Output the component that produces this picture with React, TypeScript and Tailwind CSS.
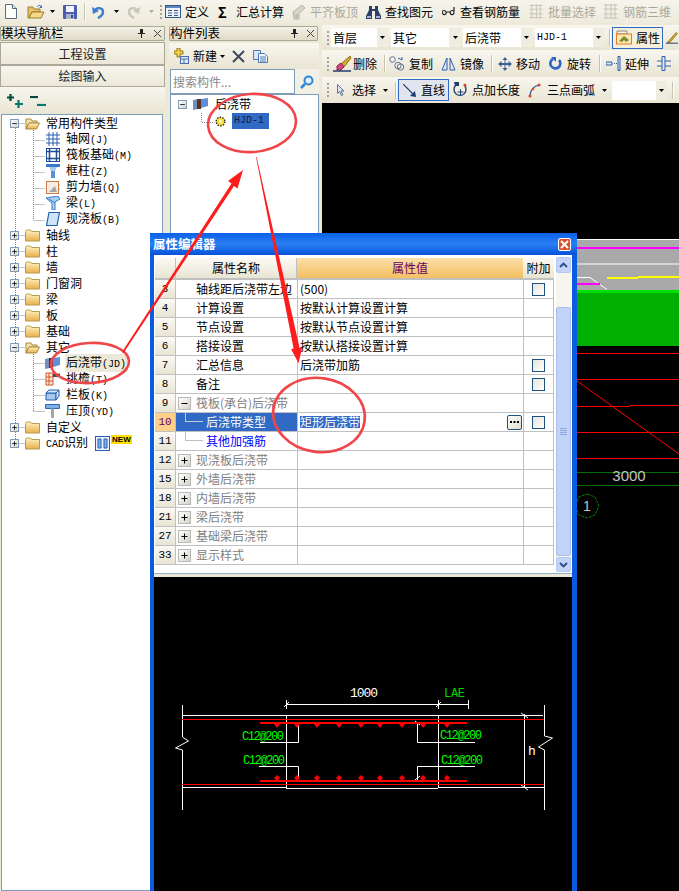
import type { ReactNode } from "react";

const cjk = "font-['Noto_Sans_CJK_SC','Liberation_Sans',sans-serif]";
const mono = "font-['Liberation_Mono',monospace] text-[10px]";

const Caret = ({ className = "", gray = false }: { className?: string; gray?: boolean }) => (
  <svg width="5" height="3" viewBox="0 0 5 3" className={"shrink-0 " + className}>
    <path d="M0 0h5L2.5 3z" fill={gray ? "#aca899" : "#000"} />
  </svg>
);

const Sep = ({ className = "" }: { className?: string }) => (
  <div className={"w-[2px] h-[17px] shrink-0 border-l border-[#c5c2b0] bg-white " + className} />
);

const Grip = ({ className = "" }: { className?: string }) => (
  <div className={"w-[3px] h-[14px] shrink-0 border-l-2 border-dotted border-[#a8a594] " + className} />
);

// toolbar icons
const NewIcon = () => (
  <svg width="12" height="15" viewBox="0 0 12 15">
    <path d="M.5.5h7l4 4v10H.5z" fill="#fdfdfa" stroke="#5a6a80" />
    <path d="M7.5.5v4h4" fill="#dfe6ee" stroke="#5a6a80" />
  </svg>
);
const OpenIcon = () => (
  <svg width="18" height="15" viewBox="0 0 18 15">
    <path d="M1 3h5l1 2h6v3H5l-3 6H1z" fill="#e8c262" stroke="#9a7a2c" />
    <path d="M2 14l3-6h12l-3 6z" fill="#f5d98a" stroke="#9a7a2c" />
    <path d="M10 3c1-2 3-2 5 0" fill="none" stroke="#3d6cb0" />
    <path d="M15 1v3h-3z" fill="#3d6cb0" />
  </svg>
);
const SaveIcon = () => (
  <svg width="14" height="14" viewBox="0 0 14 14">
    <rect width="14" height="14" rx="1" fill="#4a5fae" />
    <rect x="3" y="1" width="8" height="6" fill="#f2f4fa" />
    <rect x="3" y="9" width="8" height="5" fill="#aab4d0" />
    <rect x="8" y="10" width="2" height="3" fill="#3a4a86" />
  </svg>
);
const UndoIcon = ({ color }: { color: string }) => (
  <svg width="13" height="14" viewBox="0 0 13 14">
    <path d="M3 6c1-4 8-4 8 1 0 3-3 5-5 6" fill="none" stroke={color} strokeWidth="2.4" />
    <path d="M0 2l1 7 6-3z" fill={color} />
  </svg>
);
const RedoIcon = () => (
  <svg width="13" height="14" viewBox="0 0 13 14">
    <path d="M10 6C9 2 2 2 2 7c0 3 3 5 5 6" fill="none" stroke="#c9c7ba" strokeWidth="2.4" />
    <path d="M13 2l-1 7-6-3z" fill="#c9c7ba" />
  </svg>
);
const DefineIcon = () => (
  <svg width="16" height="13" viewBox="0 0 16 13">
    <rect x=".5" y=".5" width="15" height="12" fill="#eef2f8" stroke="#34588e" />
    <path d="M1 1h14v2H1z" fill="#5f86bc" />
    <path d="M3 5.5h4M3 8h4M3 10.5h4M9 5.5h4M9 8h4M9 10.5h4" stroke="#34588e" />
  </svg>
);
const GrayIcon = () => (
  <svg width="14" height="16" viewBox="0 0 14 16">
    <path d="M1 8l9-7 3 3-6 5v6H2z" fill="#d8d6cb" stroke="#b5b3a6" />
    <path d="M3 11h3M3 13h3" stroke="#aaa89a" />
  </svg>
);
const Binoculars = () => (
  <svg width="15" height="14" viewBox="0 0 15 14">
    <path d="M3 1h3v3h3V1h3v4l3 6v3H9V6H6v8H0v-3l3-6z" fill="#2e3f68" />
    <path d="M1 11h4v2H1zM10 11h4v2h-4z" fill="#9fb4d8" />
  </svg>
);
const Glasses = () => (
  <svg width="13" height="9" viewBox="0 0 13 9">
    <path d="M0 5c1-2 3-2 4 0 1 3-3 4-4 0zM8 5c1-2 4-2 4 0 0 4-4 3-4 0zM4 5h4M12 4V0" fill="none" stroke="#222" strokeWidth="1.2" />
  </svg>
);
const GrayGrid = ({ w }: { w: number }) => (
  <svg width={w} height="15" viewBox="0 0 15 15">
    <path d="M.5 1h14M.5 5h14M.5 10h14M.5 14h14M3 0v15M8 0v15M12 0v15" fill="none" stroke="#c6c4b7" />
  </svg>
);
const AttrIcon = () => (
  <svg width="16" height="15" viewBox="0 0 16 15">
    <path d="M1 1h10v3H1z" fill="#f6f3e6" stroke="#8c8a7c" />
    <rect x=".5" y="4" width="15" height="10" fill="#fbe7b4" stroke="#e67d23" />
    <path d="M3 11l5-5 5 4-3 2-2-2-2 2z" fill="#7e8a2a" />
  </svg>
);
const PenIcon = () => (
  <svg width="12" height="13" viewBox="0 0 19 20">
    <path d="M2 18l14-16 2 2L6 18z" fill="#d8a628" stroke="#6f5a16" />
    <path d="M0 19h19" stroke="#203a66" strokeWidth="1.5" />
  </svg>
);
const EraseIcon = () => (
  <svg width="19" height="17" viewBox="0 0 19 17">
    <path d="M8 9l9-8 1 2-7 9z" fill="#d9a92a" stroke="#8a6a14" />
    <path d="M4 11l4-3 3 4-3 3H4z" fill="#d2477e" stroke="#8c2450" />
    <path d="M0 16h18" stroke="#1f3d73" strokeWidth="1.5" />
  </svg>
);
const CopyTool = () => (
  <svg width="16" height="15" viewBox="0 0 16 15">
    <circle cx="3.5" cy="3.5" r="2.8" fill="none" stroke="#60718c" />
    <circle cx="9" cy="9.5" r="3.2" fill="none" stroke="#60718c" />
    <circle cx="11.5" cy="11" r="3.2" fill="none" stroke="#60718c" />
    <path d="M9 2l4 2M13 4l0-3" stroke="#2f5fa8" />
  </svg>
);
const MirrorIcon = () => (
  <svg width="15" height="14" viewBox="0 0 15 14">
    <path d="M6 1v12H1zM9 1v12h5z" fill="#dfe7f5" stroke="#2f5fa8" />
  </svg>
);
const MoveIcon = () => (
  <svg width="14" height="14" viewBox="0 0 14 14">
    <path d="M7 0l2.5 3h-2v3h3V4L14 7l-3.5 3V8h-3v3h2L7 14l-2.5-3h2V8h-3v2L0 7l3.5-3v2h3V3h-2z" fill="#3c6098" />
  </svg>
);
const RotateIcon = () => (
  <svg width="13" height="13" viewBox="0 0 13 13">
    <path d="M4 2a5 5 0 1 0 6 1" fill="none" stroke="#2f66c4" strokeWidth="2.6" />
    <path d="M2 0h5v5z" fill="#2f66c4" />
  </svg>
);
const ExtendIcon = () => (
  <svg width="15" height="15" viewBox="0 0 15 15">
    <path d="M0 6h6v3H0z" fill="#dde6f4" stroke="#2f5fa8" />
    <path d="M8 7.5h3" stroke="#2f5fa8" strokeDasharray="1 1" />
    <path d="M12 .5h2v14h-2z" fill="#dde6f4" stroke="#2f5fa8" />
  </svg>
);
const TrimIcon = () => (
  <svg width="14" height="15" viewBox="0 0 14 15">
    <path d="M0 5h14M0 10h14" stroke="#2f5fa8" />
    <path d="M5 .5h3v14H5z" fill="#dde6f4" stroke="#2f5fa8" />
  </svg>
);
const CursorIcon = () => (
  <svg width="8" height="12" viewBox="0 0 8 12">
    <path d="M.5.5v9l2-2 2 4 1.500-.7-2-3.800h3z" fill="#dbe3f2" stroke="#5e7499" />
  </svg>
);
const LineIcon = () => (
  <svg width="13" height="13" viewBox="0 0 13 13">
    <path d="M0 0l12 12" stroke="#1f3d73" strokeWidth="1.200" />
    <path d="M13 13l-6-1 5-5z" fill="#1f3d73" />
  </svg>
);
const PointLenIcon = () => (
  <svg width="15" height="16" viewBox="0 0 15 16">
    <path d="M3 3a6 6 0 1 0 8 0" fill="none" stroke="#1f3d73" strokeWidth="1.300" />
    <path d="M1 0h5v4H2z" fill="#1f3d73" />
    <path d="M7.500 7v6M4.500 10h6" stroke="#1f3d73" />
    <circle cx="12" cy="3" r="1.500" fill="#d84a2c" />
  </svg>
);
const ArcIcon = () => (
  <svg width="13" height="15" viewBox="0 0 13 15">
    <path d="M2 13C2 7 6 3 11 2" fill="none" stroke="#1f5fa8" strokeWidth="1.200" />
    <circle cx="2" cy="13" r="1.600" fill="#d84a2c" />
    <circle cx="5" cy="6" r="1.300" fill="#d84a2c" />
    <circle cx="11" cy="2" r="1.600" fill="#d84a2c" />
  </svg>
);

const Tool = ({ icon, label, gap, className = "", gray = false }: { icon: ReactNode; label: string; gap: string; className?: string; gray?: boolean }) => (
  <div className={"flex items-center shrink-0 " + gap + " " + className}>
    {icon}
    <span className={"whitespace-nowrap " + (gray ? "text-[#aca899]" : "text-black")}>{label}</span>
  </div>
);

const Combo = ({ label, width, arrow = "w-[11px]", code = false, className = "" }: { label: string; width: string; arrow?: string; code?: boolean; className?: string }) => (
  <div className={"h-[19px] bg-white flex items-center justify-between shrink-0 " + width + " " + className}>
    <span className={"pl-[2px] " + (code ? mono : "")}>{label}</span>
    <div className={"h-full bg-[#efece0] flex items-center justify-center " + arrow}>
      <Caret />
    </div>
  </div>
);

const PanelTitle = ({ label, width }: { label: string; width: string }) => (
  <div className={"h-[15px] flex items-center justify-between border border-[#aca899] rounded-[1px] bg-linear-to-b from-[#f3f1e6] to-[#dfdbc8] " + width}>
    <span className="text-[12.500px] leading-none whitespace-nowrap">{label}</span>
    <div className="flex items-center gap-[9px] pr-[3px]">
      <svg width="7" height="9" viewBox="0 0 7 9">
        <path d="M2 0h3v4h2v1H4v4H3V5H0V4h2z" fill="#222" />
      </svg>
      <svg width="7" height="7" viewBox="0 0 7 7">
        <path d="M0 0l7 7M7 0L0 7" stroke="#444" />
      </svg>
    </div>
  </div>
);

const Box = ({ open, size = "w-[9px] h-[9px]", border = "border-[#7f9db9]" }: { open: boolean; size?: string; border?: string }) => (
  <div className={"shrink-0 border flex items-center justify-center bg-linear-to-br from-white to-[#d5d2c4] " + size + " " + border}>
    <svg width="9" height="9" viewBox="0 0 9 9">
      <path d={open ? "M1.500 4.500h6" : "M1.500 4.500h6M4.500 1.500v6"} stroke="#000" />
    </svg>
  </div>
);

const Folder = ({ open = false }: { open?: boolean }) => (
  <svg width="15" height="13" viewBox="0 0 15 13" className="shrink-0">
    <defs>
      <linearGradient id="fld" x1="0" y1="0" x2="0" y2="1">
        <stop offset="0" stopColor="#fff3c4" />
        <stop offset="1" stopColor="#e8b048" />
      </linearGradient>
    </defs>
    {open ? (
      <>
        <path d="M1 2h5l1 2h5v2H4l-3 6z" fill="#f4e2ac" stroke="#a88a3c" />
        <path d="M1 12l3-6h10.500l-3 6z" fill="url(#fld)" stroke="#a88a3c" />
      </>
    ) : (
      <path d="M.5 12V2.500l1-1.500h4l1 1.500h8V12z" fill="url(#fld)" stroke="#b89a50" />
    )}
  </svg>
);

const BandIcon = () => (
  <svg width="15" height="12" viewBox="0 0 15 12" className="shrink-0">
    <path d="M0 2l5-1v10l-5 1z" fill="#6f8fc0" />
    <path d="M4 1h4v10H4z" fill="#5a3420" />
    <path d="M8 1l7-1v8l-7 2z" fill="#5f8ed8" />
  </svg>
);

const nodeIcons: Record<string, ReactNode> = {
  grid: (
    <svg width="14" height="14" viewBox="0 0 14 14">
      <path d="M3 0v14M7 0v14M11 0v14M0 3h14M0 7h14M0 11h14" stroke="#2a5fb0" />
    </svg>
  ),
  raft: (
    <svg width="14" height="14" viewBox="0 0 14 14">
      <rect x=".5" y=".5" width="13" height="13" fill="#fff" stroke="#1f4f96" />
      <path d="M0 3.500h14M0 10.500h14M3.500 0v14M10.500 0v14" stroke="#1f4f96" strokeWidth="1.500" />
    </svg>
  ),
  column: (
    <svg width="14" height="14" viewBox="0 0 14 14">
      <path d="M0 0h14v3H0z" fill="#3a78c8" />
      <path d="M3 3l2 4h4l2-4z" fill="#a8c8ee" />
      <path d="M5 7h4v7H5z" fill="#5a92d8" />
    </svg>
  ),
  wall: (
    <svg width="14" height="13" viewBox="0 0 14 13">
      <rect x=".5" y=".5" width="12" height="12" fill="#f8ece0" stroke="#c87a4a" />
      <path d="M3 11l6-6 2 6z" fill="#a8a8a0" />
      <path d="M13 3v2M13 7v2" stroke="#e68a30" />
    </svg>
  ),
  beam: (
    <svg width="14" height="14" viewBox="0 0 14 14">
      <path d="M0 2l12-2 2 3-5 3v8H6V7z" fill="#a9d0f2" stroke="#3a78c8" />
      <path d="M3 3l6 4" stroke="#3a78c8" />
    </svg>
  ),
  slab: (
    <svg width="14" height="14" viewBox="0 0 14 14">
      <path d="M3 .5h10.500L11 13.500H.5z" fill="#cfe4f8" stroke="#1f5fb0" strokeWidth="1.200" />
    </svg>
  ),
  band: <BandIcon />,
  eave: (
    <svg width="15" height="14" viewBox="0 0 15 14">
      <path d="M1 1h7v12H1z" fill="#fbe6d8" stroke="#d0582a" />
      <path d="M1 5h7M1 9h7M4 1v12M8 2h7v2H8z" stroke="#d0582a" fill="none" />
      <path d="M8 2h7v3H8z" fill="#3a4a68" />
    </svg>
  ),
  rail: (
    <svg width="15" height="12" viewBox="0 0 15 12">
      <path d="M1 4h10v7H1z" fill="#a8c8ee" stroke="#1f5fb0" />
      <path d="M1 4l3-3h10l-3 3zM11 4l3-3v6l-3 4z" fill="#d8e8f8" stroke="#1f5fb0" />
    </svg>
  ),
  cap: (
    <svg width="15" height="14" viewBox="0 0 15 14">
      <path d="M.5.5h14v4H.5z" fill="#7fb0e8" stroke="#2a68b8" />
      <path d="M6 4.500h3V14H6z" fill="#a8a8a0" />
    </svg>
  ),
};

const tree: { kind: "group" | "node"; label: string; code?: string; icon?: string; open?: boolean; active?: boolean }[] = [
  { kind: "group", label: "常用构件类型", open: true },
  { kind: "node", label: "轴网", code: "(J)", icon: "grid" },
  { kind: "node", label: "筏板基础", code: "(M)", icon: "raft" },
  { kind: "node", label: "框柱", code: "(Z)", icon: "column" },
  { kind: "node", label: "剪力墙", code: "(Q)", icon: "wall" },
  { kind: "node", label: "梁", code: "(L)", icon: "beam" },
  { kind: "node", label: "现浇板", code: "(B)", icon: "slab" },
  { kind: "group", label: "轴线" },
  { kind: "group", label: "柱" },
  { kind: "group", label: "墙" },
  { kind: "group", label: "门窗洞" },
  { kind: "group", label: "梁" },
  { kind: "group", label: "板" },
  { kind: "group", label: "基础" },
  { kind: "group", label: "其它", open: true },
  { kind: "node", label: "后浇带", code: "(JD)", icon: "band", active: true },
  { kind: "node", label: "挑檐", code: "(T)", icon: "eave" },
  { kind: "node", label: "栏板", code: "(K)", icon: "rail" },
  { kind: "node", label: "压顶", code: "(YD)", icon: "cap" },
  { kind: "group", label: "自定义" },
];

const LeftPanel = () => (
  <div className="w-[165px] shrink-0 flex flex-col pt-[3px]">
    <PanelTitle label="模块导航栏" width="w-[165px]" />
    <div className="mt-px h-[23px] flex items-center justify-center border border-[#aca899] bg-linear-to-b from-[#f8f6ee] to-[#ebe8d8] text-[#222]">工程设置</div>
    <div className="h-[22px] flex items-center justify-center border border-[#aca899] bg-linear-to-b from-[#f8f6ee] to-[#ebe8d8] text-[#222]">绘图输入</div>
    <div className="h-[27px] flex items-center gap-[7px] pl-[7px] bg-linear-to-b from-[#f8f6ee] to-[#e9e5d4]">
      <svg width="16" height="14" viewBox="0 0 16 14">
        <path d="M3.500 0v7M0 3.500h7" stroke="#004a40" strokeWidth="2.200" />
        <path d="M11.500 6v8M8 10h8" stroke="#007a6a" strokeWidth="2.200" />
      </svg>
      <svg width="16" height="10" viewBox="0 0 16 10">
        <path d="M0 1h8" stroke="#004a40" strokeWidth="2.200" />
        <path d="M7 9h9" stroke="#007a6a" strokeWidth="2.200" />
      </svg>
    </div>
    <div className="relative flex-1 ml-px mr-[2px] border border-[#7f9db9] bg-white">
      <svg width="60" height="340" viewBox="0 0 60 340" className="absolute left-0 -top-px">
        <path
          d="M13.500 10v320M13.500 9.500h10M31.500 14v92M31.500 26.500h12M31.500 42.500h12M31.500 58.500h12M31.500 74.500h12M31.500 90.500h12M31.500 106.500h12M13.500 121.500h10M13.500 137.500h10M13.500 153.500h10M13.500 169.500h10M13.500 185.500h10M13.500 201.500h10M13.500 217.500h10M13.500 233.500h10M31.500 238v60M31.500 249.500h12M31.500 265.500h12M31.500 281.500h12M31.500 297.500h12M13.500 313.500h10M13.500 329.500h10"
          stroke="#8a8a8a"
          strokeDasharray="1 1"
          fill="none"
        />
      </svg>
      {tree.map((row) =>
        row.kind === "group" ? (
          <div key={row.label + row.open} className="relative h-[16px] flex items-center pl-[8px]">
            <Box open={!!row.open} />
            <div className="ml-[6px] flex items-center gap-[6px]">
              <Folder open={row.open} />
              <span className="bg-white">{row.label}</span>
            </div>
          </div>
        ) : (
          <div key={row.label} className="relative h-[16px] flex items-center pl-[43px]">
            <div className="w-[15px] h-[14px] shrink-0 flex items-center justify-center">{nodeIcons[row.icon ?? "grid"]}</div>
            <span className={"ml-[5px] whitespace-nowrap leading-[15px] px-px " + (row.active ? "bg-[#ece9d8]" : "")}>
              {row.label}
              <span className={mono}>{row.code}</span>
            </span>
          </div>
        )
      )}
      <div className="relative h-[16px] flex items-center pl-[8px]">
        <Box open={false} />
        <div className="ml-[6px] flex items-center gap-[6px]">
          <Folder />
          <span className="whitespace-nowrap">
            <span className={mono}>CAD</span>识别
          </span>
          <svg width="15" height="15" viewBox="0 0 15 15" className="ml-[1px]">
            <rect x=".5" y=".5" width="14" height="14" fill="#e8f0fa" stroke="#2a5fb0" />
            <path d="M3 3h3v9H3zM9 3h3v9H9z" fill="#7fb0e8" stroke="#2a5fb0" />
          </svg>
          <span className="-ml-[5px] -mt-[8px] px-px bg-[#ffe000] text-[8px] leading-[9px] font-bold font-['Liberation_Sans',sans-serif]">NEW</span>
        </div>
      </div>
    </div>
  </div>
);

const MiddlePanel = () => (
  <div className="w-[150px] ml-[4px] shrink-0 flex flex-col pt-[3px]">
    <PanelTitle label="构件列表" width="w-[149px]" />
    <div className="h-[26px] mt-[2px] flex items-center pl-[5px] bg-linear-to-b from-[#f8f6ee] to-[#e9e5d4]">
      <svg width="15" height="16" viewBox="0 0 15 16">
        <path d="M3 0h3v3h3v3H6v3H3V6H0V3h3z" fill="#f2d04a" stroke="#9a7a10" />
        <rect x="6.500" y="8.500" width="8" height="7" fill="#dfe8f6" stroke="#4a6ea8" />
        <path d="M7 11h7M10 11v4" stroke="#4a6ea8" />
      </svg>
      <span className="ml-[4px]">新建</span>
      <Caret className="ml-[3px]" />
      <svg width="13" height="13" viewBox="0 0 13 13" className="ml-[7px]">
        <path d="M1 1l11 11M12 1L1 12" stroke="#3c4a5a" strokeWidth="2" />
      </svg>
      <svg width="15" height="13" viewBox="0 0 15 13" className="ml-[8px]">
        <path d="M.5.5h7v9h-7z" fill="#dce8f8" stroke="#4a78b8" />
        <path d="M5.500 3.500h6l3 3v6h-9z" fill="#f4f8fd" stroke="#4a78b8" />
        <path d="M7 7h6M7 9h6M7 11h6" stroke="#4a78b8" />
      </svg>
    </div>
    <div className="h-[25px] flex bg-[#ece9d8]">
      <div className="w-[125px] ml-px border border-[#7f9db9] bg-white flex items-center pl-[2px] text-[#8a8a8a]">搜索构件...</div>
      <div className="w-[24px] flex items-center justify-center bg-[#f2efe4]">
        <svg width="14" height="14" viewBox="0 0 14 14">
          <circle cx="8.500" cy="5.500" r="4" fill="#e0f0fc" stroke="#2f86d8" strokeWidth="2" />
          <path d="M5 9l-4 4" stroke="#2f86d8" strokeWidth="2.500" />
        </svg>
      </div>
    </div>
    <div className="relative flex-1 ml-px border border-[#7f9db9] bg-white pt-px">
      <div className="h-[16px] flex items-center pl-[7px]">
        <Box open />
        <div className="ml-[6px]"><BandIcon /></div>
        <span className="ml-[7px]">后浇带</span>
      </div>
      <div className="h-[16px] mt-px flex items-center pl-[44px]">
        <svg width="11" height="11" viewBox="0 0 11 11">
          <circle cx="5.500" cy="5.500" r="4.300" fill="#f5e040" stroke="#2a2a10" strokeWidth="1.400" strokeDasharray="1.500 1.200" />
          <circle cx="5.500" cy="5.500" r="1.300" fill="#fff" />
        </svg>
        <span className={"ml-[6px] w-[37px] h-[16px] bg-[#316ac5] text-[#0c1c48] flex items-center pl-[2px] " + mono}>HJD-1</span>
      </div>
      <svg width="30" height="30" viewBox="0 0 30 30" className="absolute left-[30px] top-[10px]">
        <path d="M.5 8v9.500H13" stroke="#8a8a8a" strokeDasharray="1 1" fill="none" />
      </svg>
    </div>
  </div>
);

const CanvasArt = () => (
  <svg viewBox="322 103 357 788" className="absolute inset-0 w-full h-full">
    <rect x="322" y="239" width="357" height="51" fill="#a9a9a9" />
    <path d="M322 239.500h357M322 264h357" stroke="#fff" />
    <path d="M322 248h357" stroke="#ff00ff" strokeWidth="2" />
    <path d="M577 277.500h13l17 12" stroke="#fff" fill="none" />
    <path d="M577 284h23" stroke="#ff00ff" strokeWidth="2" />
    <path d="M607 278h31M638 277h41" stroke="#ffff00" strokeWidth="2" />
    <rect x="322" y="290" width="357" height="3" fill="#00e000" />
    <rect x="322" y="293" width="357" height="53" fill="#00b000" />
    <path d="M322 353.500h357M322 379.500h357M322 406.500h308M630 405.500h49M322 432.500h357M322 458.500h357M577 381l102 73" stroke="#ff0000" fill="none" />
    <path d="M322 472.500h357M322 485.500h357" stroke="#007000" />
    <text x="629" y="481" textAnchor="middle" fill="#c4c4c4" fontSize="15" fontFamily="Liberation Sans">3000</text>
    <path d="M587 494l8 3 4 9-4 9-8 3-8-3-4-9 4-9z" fill="none" stroke="#008000" strokeDasharray="3 1" />
    <text x="587" y="511" textAnchor="middle" fill="#c4c4c4" fontSize="14" fontFamily="Liberation Sans">1</text>
  </svg>
);

const CadDetail = () => {
  const xs = [277, 297, 317, 339, 361, 380, 402, 423, 447];
  const labels = [
    [242, 740],
    [440, 739],
    [243, 764],
    [441, 764],
  ];
  return (
    <svg viewBox="154 577 418 314" className="w-full h-full">
      <g stroke="#fff" fill="none">
        <path d="M182.500 705v32l6 4-13 7 7 2v60M544.500 705v31l8 2-14 9 6 3v60" />
        <path d="M182 715.500h361M182 787.500h104M438 787.500h106M286 788.500h152" />
        <path d="M286.500 715v73M438.500 715v73" />
        <path d="M286 704.500h182M286.500 700v9M438.500 700v9M468.500 700v9M284 707l5-5M436 707l5-5" />
        <path d="M298.500 725v17.500H260M417.500 723v19.500H475M259 766.500h39.500V777M475 766.500h-57.500V780" />
        <path d="M524.500 714v74M521 713l7 5M521 785l7 5M415 721l5 4M415 780l5 -4" />
      </g>
      <path d="M182 719.500h362M182 784.500h362" stroke="#ff0000" />
      <path d="M260 723h207M260 781h207" stroke="#ff0000" strokeWidth="2" />
      {xs.map((x) => (
        <g key={x} fill="#ff0000">
          <path d={`M${x - 3} 724h6l-3 4z`} />
          <path d={`M${x - 3} 778l3-3 3 3-3 3z`} />
        </g>
      ))}
      <g fontFamily="Liberation Mono" fontSize="12">
        {labels.map(([x, y]) => (
          <text key={`${x}-${y}`} x={x} y={y} fill="#00ff00" textLength="42">C12@200</text>
        ))}
        <text x="350" y="697" fill="#fff" fontSize="13" textLength="28">1000</text>
        <text x="444" y="697" fill="#00d800" textLength="21">LAE</text>
        <text x="528" y="755" fill="#fff" fontSize="13">h</text>
      </g>
    </svg>
  );
};

type Row = { no: string; name: string; value?: string; check?: boolean; box?: "plus" | "minus"; kind?: "sub" | "active" | "blue"; tone?: "gray" };

const rows: Row[] = [
  { no: "3", name: "轴线距后浇带左边", value: "(500)", check: true },
  { no: "4", name: "计算设置", value: "按默认计算设置计算" },
  { no: "5", name: "节点设置", value: "按默认节点设置计算" },
  { no: "6", name: "搭接设置", value: "按默认搭接设置计算" },
  { no: "7", name: "汇总信息", value: "后浇带加筋", check: true },
  { no: "8", name: "备注", check: true },
  { no: "9", name: "筏板(承台)后浇带", box: "minus", tone: "gray" },
  { no: "10", name: "后浇带类型", value: "矩形后浇带", check: true, kind: "active" },
  { no: "11", name: "其他加强筋", kind: "blue" },
  { no: "12", name: "现浇板后浇带", box: "plus", tone: "gray" },
  { no: "15", name: "外墙后浇带", box: "plus", tone: "gray" },
  { no: "18", name: "内墙后浇带", box: "plus", tone: "gray" },
  { no: "21", name: "梁后浇带", box: "plus", tone: "gray" },
  { no: "27", name: "基础梁后浇带", box: "plus", tone: "gray" },
  { no: "33", name: "显示样式", box: "plus", tone: "gray" },
];

const Check = () => (
  <div className="w-[13px] h-[13px] border border-[#1c5180] bg-linear-to-br from-[#e6e4d8] to-white" />
);

const NameCell = ({ row }: { row: Row }) => {
  if (row.kind === "active") {
    return (
      <div className="relative w-[121px] h-full bg-[#316ac5] text-white flex items-center pl-[30px] shrink-0">
        <div className="absolute left-[9px] top-0 bottom-[9px] w-[18px] border-l border-b border-[#c8c8c8]" />
        {row.name}
      </div>
    );
  }
  if (row.kind === "blue") {
    return (
      <div className="relative w-[121px] h-full text-[#0000ff] flex items-center pl-[30px] shrink-0">
        <div className="absolute left-[9px] top-0 bottom-[9px] w-[18px] border-l border-b border-[#c0c0c0]" />
        {row.name}
      </div>
    );
  }
  return (
    <div className={"w-[121px] h-full flex items-center shrink-0 whitespace-nowrap overflow-hidden " + (row.box ? "pl-[2px]" : "pl-[20px]") + (row.tone === "gray" ? " text-[#808080]" : "")}>
      {row.box && <Box open={row.box === "minus"} size="w-[13px] h-[13px]" border="border-[#b8b8b8]" />}
      <span className={row.box ? "ml-[5px]" : ""}>{row.name}</span>
    </div>
  );
};

const PropertyDialog = () => (
  <div className="absolute left-[150px] top-[233px] w-[427px] h-[658px] z-10 flex flex-col border-l-4 border-r-[5px] border-[#0a5be0]">
    <div className="-mx-[4px] -mr-[5px] h-[22px] flex items-center justify-between pl-[3px] pr-[6px] rounded-t-[3px] bg-linear-to-b from-[#0a60e8] via-[#2a80f4] to-[#0650d8]">
      <span className="text-white font-bold text-[12.500px]">属性编辑器</span>
      <div className="w-[13px] h-[13px] rounded-[2px] border border-white bg-[#d9512c] flex items-center justify-center">
        <svg width="9" height="9" viewBox="0 0 9 9">
          <path d="M1 1l7 7M8 1L1 8" stroke="#fff" strokeWidth="2" />
        </svg>
      </div>
    </div>
    <div className="flex h-[318px] shrink-0 bg-white">
      <div className="w-[400px] shrink-0 pl-px pt-[3px]">
        <div className="h-[22px] flex border-b-2 border-[#c0c0c0]">
          <div className="w-[21px] bg-linear-to-b from-[#fbfaf4] to-[#e8e5d5] border-r border-[#c0c0c0]" />
          <div className="w-[121px] bg-linear-to-b from-[#fbfaf4] to-[#e8e5d5] flex items-center justify-center border-r border-[#c0c0c0]">属性名称</div>
          <div className="w-[226px] bg-linear-to-b from-[#fbdfa8] to-[#f3bf60] text-[#660066] flex items-center justify-center">属性值</div>
          <div className="w-[31px] bg-linear-to-b from-[#fbfaf4] to-[#e8e5d5] flex items-center justify-center">附加</div>
        </div>
        {rows.map((row) => (
          <div key={row.no} className="h-[19px] flex items-center border-b border-[#c0c0c0]">
            <div className={"w-[21px] h-full shrink-0 flex items-center justify-center border-r border-[#c0c0c0] " + (row.kind === "active" ? "bg-[#fdd08a] text-[#660066]" : "bg-linear-to-b from-[#fbfaf4] to-[#e8e5d5]")}>
              <span className="font-['Liberation_Mono',monospace] text-[11px]">{row.no}</span>
            </div>
            <NameCell row={row} />
            <div className="w-[226px] h-full shrink-0 border-l border-[#c0c0c0] flex items-center justify-between pl-[2px] pr-px">
              <span className={"whitespace-nowrap " + (row.kind === "active" ? "bg-[#316ac5] text-white" : "")}>{row.value}</span>
              {row.kind === "active" && (
                <div className="w-[15px] h-[15px] rounded-[2px] border border-[#1c5180] bg-linear-to-br from-white to-[#e0ddd0] flex items-center justify-center">
                  <svg width="9" height="2" viewBox="0 0 9 2">
                    <path d="M0 0h2v2H0zM3.500 0h2v2h-2zM7 0h2v2H7z" fill="#000" />
                  </svg>
                </div>
              )}
            </div>
            <div className="w-[31px] h-full shrink-0 border-l border-r border-[#c0c0c0] flex items-center justify-center">
              {row.check && <Check />}
            </div>
          </div>
        ))}
      </div>
      <div className="ml-[2px] w-[15px] mt-[2px] mb-[1px] flex flex-col bg-[#f6f5ee]">
        <div className="h-[16px] rounded-[2px] border border-[#b5c8ef] bg-[#c4d4f8] flex items-center justify-center">
          <svg width="9" height="6" viewBox="0 0 9 6">
            <path d="M1 5l3.500-3.500L8 5" fill="none" stroke="#2a4a88" strokeWidth="1.800" />
          </svg>
        </div>
        <div className="h-[34px]" />
        <div className="flex-1 rounded-[2px] border border-[#a8bdea] bg-[#c3d4fb] flex items-center justify-center">
          <svg width="7" height="8" viewBox="0 0 7 8">
            <path d="M0 .5h7M0 2.500h7M0 4.500h7M0 6.500h7" stroke="#8fa8e0" />
          </svg>
        </div>
        <div className="h-[15px] mt-px rounded-[2px] border border-[#b5c8ef] bg-[#c4d4f8] flex items-center justify-center">
          <svg width="9" height="6" viewBox="0 0 9 6">
            <path d="M1 1l3.500 3.500L8 1" fill="none" stroke="#2a4a88" strokeWidth="1.800" />
          </svg>
        </div>
      </div>
    </div>
    <div className="h-[4px] shrink-0 border-t border-[#8fb0c8] bg-[#ece9d8]" />
    <div className="flex-1 min-h-0 bg-black">
      <CadDetail />
    </div>
  </div>
);

const Annotations = () => (
  <svg viewBox="0 0 679 891" className="absolute inset-0 w-full h-full z-20 pointer-events-none">
    <g fill="none" stroke="#f0464a" strokeWidth="2.600">
      <ellipse cx="252" cy="123" rx="44" ry="29" transform="rotate(-4 252 123)" />
      <ellipse cx="90" cy="363" rx="39" ry="20" transform="rotate(-3 90 363)" />
      <ellipse cx="319" cy="415" rx="46" ry="37" transform="rotate(8 319 415)" />
    </g>
    <path d="M256 157l.6-.1 43 191 2.500-.6-3.500 16-7.500-14 2.500-.7z" fill="#ff1c1c" />
    <path d="M122 352l1.500 1L234 186l3.500 2.500L243 170l-15 11 3.500 2.500z" fill="#ff1c1c" />
  </svg>
);

export default function App() {
  return (
    <div className={"relative w-[679px] h-[891px] overflow-hidden flex flex-col bg-[#ece9d8] text-[12px] leading-none text-black " + cjk}>
      {/* main toolbar */}
      <div className="h-[23px] shrink-0 flex items-center overflow-hidden bg-linear-to-b from-[#f6f4ec] to-[#eeebdd]">
        <div className="ml-[5px]"><NewIcon /></div>
        <div className="ml-[10px]"><OpenIcon /></div>
        <Caret className="ml-[5px]" />
        <div className="ml-[8px]"><SaveIcon /></div>
        <Sep className="ml-[7px]" />
        <div className="ml-[6px]"><UndoIcon color="#3a7cd0" /></div>
        <Caret className="ml-[9px]" />
        <div className="ml-[8px]"><RedoIcon /></div>
        <Caret className="ml-[9px]" gray />
        <Grip className="ml-[6px]" />
        <Tool className="ml-[2px]" gap="gap-[4px]" icon={<DefineIcon />} label="定义" />
        <Tool className="ml-[9px]" gap="gap-[8px]" icon={<span className="w-[10px] font-bold text-[14px]">Σ</span>} label="汇总计算" />
        <Tool className="ml-[8px]" gap="gap-[4px]" gray icon={<GrayIcon />} label="平齐板顶" />
        <Tool className="ml-[8px]" gap="gap-[4px]" icon={<Binoculars />} label="查找图元" />
        <Tool className="ml-[9px]" gap="gap-[5px]" icon={<Glasses />} label="查看钢筋量" />
        <Tool className="ml-[9px]" gap="gap-[5px]" gray icon={<GrayGrid w={14} />} label="批量选择" />
        <Tool className="ml-[7px]" gap="gap-[5px]" gray icon={<GrayGrid w={15} />} label="钢筋三维" />
      </div>
      <div className="flex-1 min-h-0 flex">
        <LeftPanel />
        <MiddlePanel />
        <div className="ml-[3px] w-[357px] shrink-0 flex flex-col">
          <div className="h-[25px] mt-[2px] flex items-center overflow-hidden bg-linear-to-b from-[#f8f6ee] to-[#e9e5d4]">
            <Grip className="ml-[5px]" />
            <Combo className="ml-[1px]" label="首层" width="w-[57px]" />
            <Combo className="ml-[3px]" label="其它" width="w-[70px]" arrow="w-[12px]" />
            <Combo className="ml-[2px]" label="后浇带" width="w-[69px]" />
            <Combo className="ml-[3px]" label="HJD-1" width="w-[69px]" code />
            <Sep className="ml-[5px]" />
            <div className="ml-[1px] w-[51px] h-[22px] shrink-0 flex items-center gap-[4px] pl-[3px] border border-[#316ac5] bg-[#f6efdc]">
              <AttrIcon />
              <span>属性</span>
            </div>
            <div className="ml-[3px]"><PenIcon /></div>
          </div>
          <div className="h-[27px] flex items-center overflow-hidden bg-linear-to-b from-[#f8f6ee] to-[#e9e5d4]">
            <Grip className="ml-[5px]" />
            <Tool className="ml-[3px]" gap="gap-px" icon={<EraseIcon />} label="删除" />
            <Sep className="ml-[7px]" />
            <Tool className="ml-[3px]" gap="gap-[4px]" icon={<CopyTool />} label="复制" />
            <Tool className="ml-[8px]" gap="gap-[4px]" icon={<MirrorIcon />} label="镜像" />
            <Sep className="ml-[7px]" />
            <Tool className="ml-[5px]" gap="gap-[4px]" icon={<MoveIcon />} label="移动" />
            <Tool className="ml-[9px]" gap="gap-[5px]" icon={<RotateIcon />} label="旋转" />
            <Sep className="ml-[8px]" />
            <Tool className="ml-[5px]" gap="gap-[4px]" icon={<ExtendIcon />} label="延伸" />
            <div className="ml-[8px]"><TrimIcon /></div>
          </div>
          <div className="h-[26px] flex items-center overflow-hidden bg-linear-to-b from-[#f8f6ee] to-[#e9e5d4]">
            <Grip className="ml-[5px]" />
            <Tool className="ml-[7px]" gap="gap-[7px]" icon={<CursorIcon />} label="选择" />
            <Caret className="ml-[7px]" />
            <Sep className="ml-[7px]" />
            <div className="ml-px w-[51px] h-[22px] shrink-0 flex items-center gap-[5px] pl-[4px] border border-[#316ac5] bg-[#e1e6ee]">
              <LineIcon />
              <span>直线</span>
            </div>
            <Tool className="ml-[4px]" gap="gap-[4px]" icon={<PointLenIcon />} label="点加长度" />
            <Tool className="ml-[8px]" gap="gap-[6px]" icon={<ArcIcon />} label="三点画弧" />
            <Caret className="ml-[7px]" />
            <Combo className="ml-[5px]" label="" width="w-[55px]" />
            <Sep className="ml-[5px]" />
          </div>
          <div className="relative flex-1 bg-black">
            <CanvasArt />
          </div>
        </div>
      </div>
      <PropertyDialog />
      <Annotations />
    </div>
  );
}
